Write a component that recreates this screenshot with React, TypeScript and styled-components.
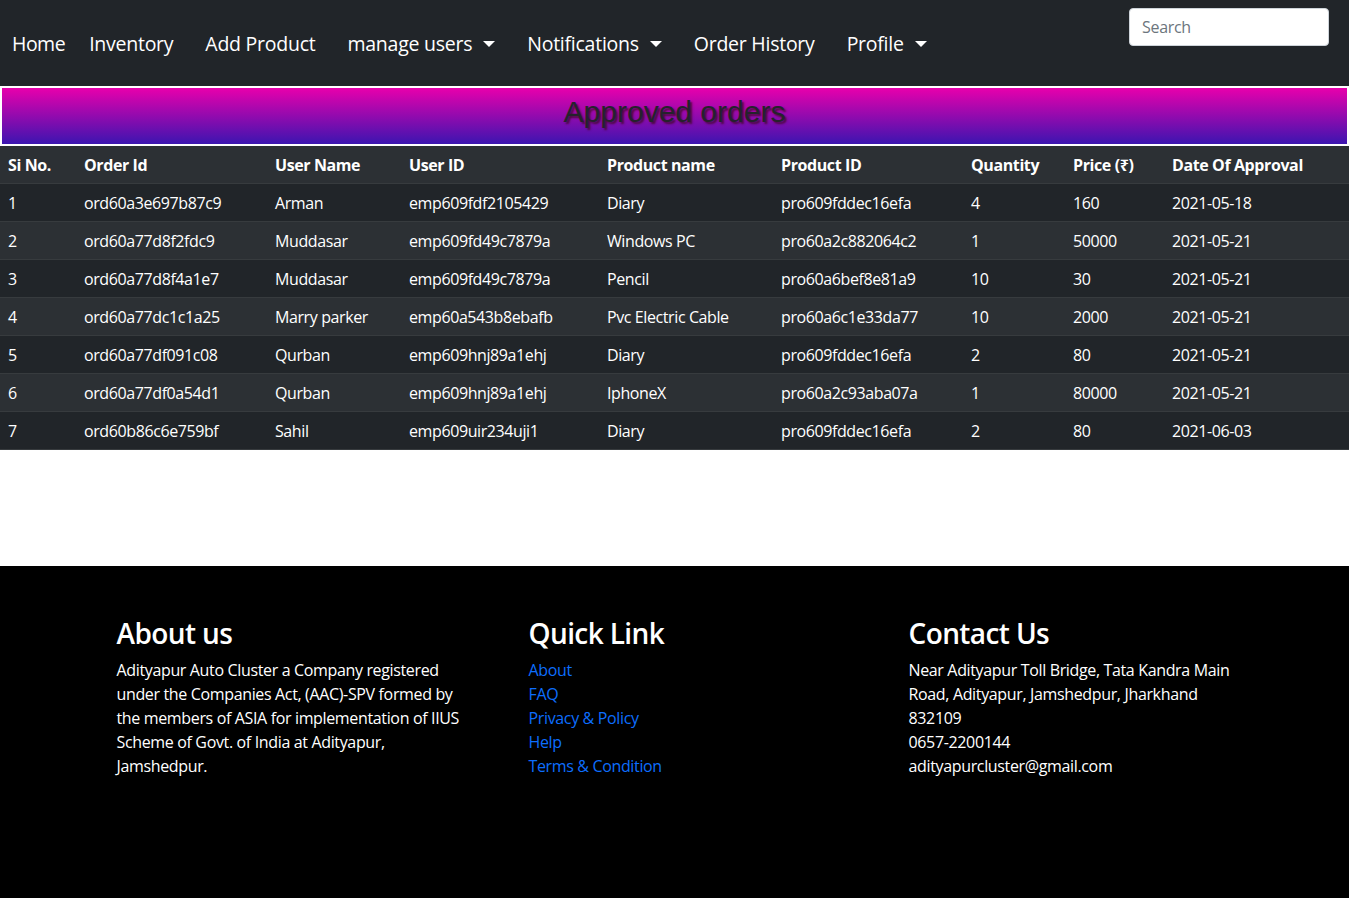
import React from "react";
import styled, { createGlobalStyle } from "styled-components";

const GlobalStyle = createGlobalStyle`
  body {
    margin: 0;
    background: #fff;
    font-family: "Open Sans", "Noto Sans", sans-serif;
  }
  * { box-sizing: border-box; }
`;

const orders: string[][] = [
  ["1", "ord60a3e697b87c9", "Arman", "emp609fdf2105429", "Diary", "pro609fddec16efa", "4", "160", "2021-05-18"],
  ["2", "ord60a77d8f2fdc9", "Muddasar", "emp609fd49c7879a", "Windows PC", "pro60a2c882064c2", "1", "50000", "2021-05-21"],
  ["3", "ord60a77d8f4a1e7", "Muddasar", "emp609fd49c7879a", "Pencil", "pro60a6bef8e81a9", "10", "30", "2021-05-21"],
  ["4", "ord60a77dc1c1a25", "Marry parker", "emp60a543b8ebafb", "Pvc Electric Cable", "pro60a6c1e33da77", "10", "2000", "2021-05-21"],
  ["5", "ord60a77df091c08", "Qurban", "emp609hnj89a1ehj", "Diary", "pro609fddec16efa", "2", "80", "2021-05-21"],
  ["6", "ord60a77df0a54d1", "Qurban", "emp609hnj89a1ehj", "IphoneX", "pro60a2c93aba07a", "1", "80000", "2021-05-21"],
  ["7", "ord60b86c6e759bf", "Sahil", "emp609uir234uji1", "Diary", "pro609fddec16efa", "2", "80", "2021-06-03"],
];

const headers = ["Si No.", "Order Id", "User Name", "User ID", "Product name", "Product ID", "Quantity", "Price (₹)", "Date Of Approval"];
const colWidths = [76, 191, 134, 198, 174, 190, 102, 99, 185];

const Navbar = styled.nav`
  height: 86px;
  background: #212529;
  display: flex;
  align-items: flex-start;
  justify-content: space-between;
  padding: 0 20px 0 12px;
`;

const NavList = styled.div`
  display: flex;
  align-items: center;
  height: 86px;
`;

const Brand = styled.a`
  color: #fff;
  font-size: 19.5px;
  letter-spacing: -0.5px;
  text-decoration: none;
  margin-right: 8px;
`;

const NavLink = styled.a<{ $dropdown?: boolean }>`
  color: #fff;
  font-size: 19.5px;
  letter-spacing: -0.25px;
  padding: 0 16px;
  text-decoration: none;
  white-space: nowrap;
  &::after {
    content: ${(p) => (p.$dropdown ? '""' : "none")};
    display: inline-block;
    margin-left: 11px;
    vertical-align: 4px;
    border-top: 6px solid #fff;
    border-left: 6px solid transparent;
    border-right: 6px solid transparent;
  }
`;

const SearchInput = styled.input`
  margin-top: 8px;
  width: 200px;
  height: 38px;
  border: 1px solid #ced4da;
  border-radius: 4px;
  padding: 0 12px;
  font-size: 16px;
  letter-spacing: -0.3px;
  font-family: inherit;
  color: #212529;
  &::placeholder { color: #6c757d; }
`;

const Main = styled.main`
  padding-bottom: 116px;
`;

const TitleBar = styled.h2`
  margin: 0;
  height: 60px;
  border: 2px solid #fff;
  padding-bottom: 9px;
  background: linear-gradient(to bottom, #e800ac, #3c15b0);
  display: flex;
  align-items: center;
  justify-content: center;
  font-family: "Liberation Sans", Arial, sans-serif;
  font-weight: 400;
  font-size: 30px;
  color: #25222c;
  text-shadow: 2px 2px 2px rgba(70, 10, 50, 0.9);
`;

const Table = styled.table`
  width: 100%;
  border-collapse: collapse;
  table-layout: fixed;
  color: #fff;
  font-size: 16px;
  letter-spacing: -0.4px;
`;

const Th = styled.th`
  text-align: left;
  font-weight: 700;
  background: #2c3034;
  padding: 8px 8px 6px;
  line-height: 23px;
  border-bottom: 1px solid #373b3e;
  white-space: nowrap;
`;

const Row = styled.tr<{ $odd: boolean }>`
  background: ${(p) => (p.$odd ? "#212529" : "#2c3034")};
`;

const Td = styled.td`
  padding: 8px 8px 6px;
  line-height: 23px;
  border-bottom: 1px solid #373b3e;
  white-space: nowrap;
`;

const Footer = styled.footer`
  background: #000;
  color: #fff;
  min-height: 332px;
  padding-top: 51px;
`;

const FooterGrid = styled.div`
  width: 1140px;
  margin: 0 auto;
  padding: 0 12px;
  display: grid;
  grid-template-columns: 412px 380px 1fr;
  letter-spacing: -0.35px;
`;

const FooterCol = styled.div<{ $textWidth: number }>`
  & > p, & > ul { max-width: ${(p) => p.$textWidth}px; }
`;

const FooterTitle = styled.h3`
  margin: 0 0 7px;
  font-size: 28px;
  font-weight: 600;
  letter-spacing: -0.6px;
  line-height: 1.2;
`;

const FooterText = styled.p`
  margin: 0;
  font-size: 16px;
  line-height: 24px;
`;

const LinkList = styled.ul`
  list-style: none;
  margin: 0;
  padding: 0;
  font-size: 16px;
  line-height: 24px;
`;

const FooterLink = styled.a`
  color: #0d6efd;
  text-decoration: none;
`;

export default function App() {
  return (
    <>
      <GlobalStyle />
      <Navbar>
        <NavList>
          <Brand href="#">Home</Brand>
          <NavLink href="#">Inventory</NavLink>
          <NavLink href="#">Add Product</NavLink>
          <NavLink href="#" $dropdown>manage users</NavLink>
          <NavLink href="#" $dropdown>Notifications</NavLink>
          <NavLink href="#">Order History</NavLink>
          <NavLink href="#" $dropdown>Profile</NavLink>
        </NavList>
        <SearchInput placeholder="Search" />
      </Navbar>
      <Main>
        <TitleBar>Approved orders</TitleBar>
        <Table>
          <colgroup>
            {colWidths.map((w, i) => (
              <col key={i} style={{ width: w }} />
            ))}
          </colgroup>
          <thead>
            <tr>
              {headers.map((h) => (
                <Th key={h}>{h}</Th>
              ))}
            </tr>
          </thead>
          <tbody>
            {orders.map((r, i) => (
              <Row key={r[1]} $odd={i % 2 === 0}>
                {r.map((c, j) => (
                  <Td key={j}>{c}</Td>
                ))}
              </Row>
            ))}
          </tbody>
        </Table>
      </Main>
      <Footer>
        <FooterGrid>
          <FooterCol $textWidth={360}>
            <FooterTitle>About us</FooterTitle>
            <FooterText>
              Adityapur Auto Cluster a Company registered under the Companies Act, (AAC)-SPV formed by the members of
              ASIA for implementation of IIUS Scheme of Govt. of India at Adityapur, Jamshedpur.
            </FooterText>
          </FooterCol>
          <FooterCol $textWidth={300}>
            <FooterTitle>Quick Link</FooterTitle>
            <LinkList>
              <li><FooterLink href="#">About</FooterLink></li>
              <li><FooterLink href="#">FAQ</FooterLink></li>
              <li><FooterLink href="#">Privacy &amp; Policy</FooterLink></li>
              <li><FooterLink href="#">Help</FooterLink></li>
              <li><FooterLink href="#">Terms &amp; Condition</FooterLink></li>
            </LinkList>
          </FooterCol>
          <FooterCol $textWidth={340}>
            <FooterTitle>Contact Us</FooterTitle>
            <FooterText>
              Near Adityapur Toll Bridge, Tata Kandra Main Road, Adityapur, Jamshedpur, Jharkhand 832109
            </FooterText>
            <FooterText>0657-2200144</FooterText>
            <FooterText>adityapurcluster@gmail.com</FooterText>
          </FooterCol>
        </FooterGrid>
      </Footer>
    </>
  );
}
